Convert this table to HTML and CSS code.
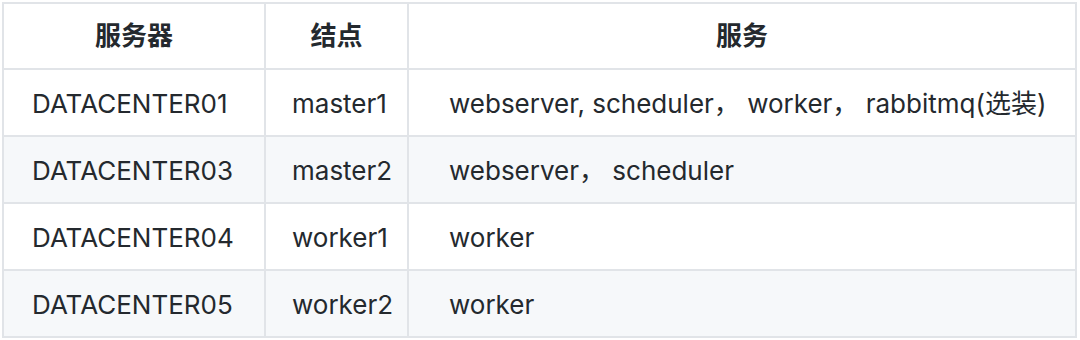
FILE: index.html
```html
<!DOCTYPE html>
<html lang="zh">
<head>
<meta charset="utf-8">
<link rel="stylesheet" href="styles.css">
</head>
<body>
<table class="grid">
  <colgroup>
    <col class="c-server">
    <col class="c-node">
    <col class="c-svc">
  </colgroup>
  <thead>
    <tr>
      <th>服务器</th>
      <th>结点</th>
      <th>服务</th>
    </tr>
  </thead>
  <tbody>
    <tr>
      <td class="server">DATACENTER01</td>
      <td class="node">master1</td>
      <td class="svc">webserver, scheduler， worker， rabbitmq(选装)</td>
    </tr>
    <tr class="alt">
      <td class="server">DATACENTER03</td>
      <td class="node">master2</td>
      <td class="svc">webserver， scheduler</td>
    </tr>
    <tr>
      <td class="server">DATACENTER04</td>
      <td class="node">worker1</td>
      <td class="svc">worker</td>
    </tr>
    <tr class="alt">
      <td class="server">DATACENTER05</td>
      <td class="node">worker2</td>
      <td class="svc">worker</td>
    </tr>
  </tbody>
</table>
</body>
</html>
```

FILE: styles.css
```css
html, body {
  margin: 0;
  padding: 0;
  background: #ffffff;
}

body {
  padding: 2px 0 0 2px;
  font-family: Inter, "Noto Sans CJK SC", sans-serif;
  color: #24292e;
}

.grid {
  border-collapse: collapse;
  table-layout: fixed;
  width: 1075px;
  font-size: 26px;
  line-height: 30px;
}

.c-server { width: 262px; }
.c-node { width: 143px; }

.grid th,
.grid td {
  border: 2px solid #e1e4e8;
  height: 67px;
  padding: 3px 0 0 0;
  box-sizing: border-box;
  vertical-align: middle;
  white-space: nowrap;
}

.grid th {
  font-weight: bold;
  text-align: center;
  padding-top: 0;
  height: 66px;
}

.grid tr.alt td {
  background: #f6f8fa;
}

.grid td.server { padding-left: 28px; }
.grid td.node { padding-left: 26px; }
.grid td.svc { padding-left: 40px; }
```
